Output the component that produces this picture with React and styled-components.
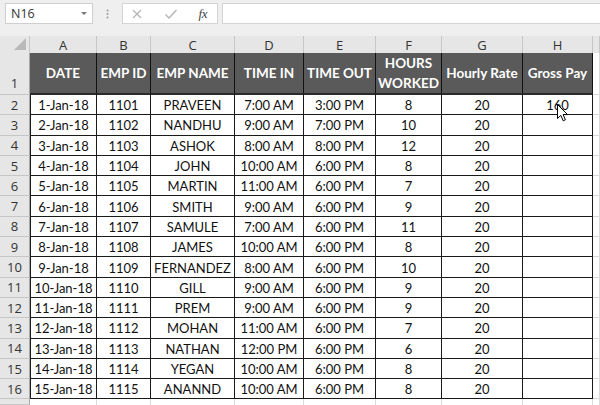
import React from 'react';
import styled, { createGlobalStyle } from 'styled-components';

const Global = createGlobalStyle`
  html, body { margin: 0; padding: 0; background: #fff; overflow: hidden; }
  #root { width: 600px; height: 405px; }
  * { box-sizing: border-box; }
`;

const Frame = styled.div`
  position: relative;
  width: 600px;
  height: 405px;
  display: flex;
  flex-direction: column;
  overflow: hidden;
  background: #fff;
`;

const Toolbar = styled.div`
  flex: none;
  height: 36px;
  display: flex;
  align-items: flex-start;
  padding: 3px 0 0 5px;
  background: #efefef;
  font-family: "Open Sans", "Noto Sans", sans-serif;
`;

const NameBox = styled.div`
  width: 88px;
  height: 21px;
  display: flex;
  align-items: center;
  justify-content: space-between;
  padding: 0 5px 0 5px;
  background: #fff;
  border: 1px solid #cfcfcf;
  font-size: 12.5px;
  color: #333;
`;

const Caret = styled.span`
  width: 0;
  height: 0;
  border-left: 3.5px solid transparent;
  border-right: 3.5px solid transparent;
  border-top: 3.5px solid #777;
`;

const Grip = styled.div`
  width: 29px;
  height: 21px;
  display: flex;
  align-items: center;
  justify-content: center;
`;

const FxGroup = styled.div`
  width: 96px;
  height: 21px;
  display: flex;
  align-items: center;
  justify-content: space-between;
  padding: 0 10px 0 8px;
  background: #fff;
  border: 1px solid #d4d4d4;
`;

const FxLabel = styled.span`
  font-family: "Liberation Serif", serif;
  font-style: italic;
  font-size: 13px;
  color: #444;
  letter-spacing: -0.5px;
`;

const FormulaInput = styled.div`
  flex: 1;
  height: 21px;
  margin-left: 4px;
  background: #fff;
  border: 1px solid #d4d4d4;
  border-right: none;
`;

const Sheet = styled.div`
  flex: 1;
  display: grid;
  grid-template-columns: 30px 67px 54px 84px 69px 72px 66px 81px 70px 7px;
  grid-template-rows: 17px 42px repeat(15, 20.3px) 1fr;
  font-family: Lato, "Open Sans", sans-serif;
`;

const Corner = styled.div`
  position: relative;
  background: #e6e6e6;
  border-right: 1px solid #c6c6c6;
  &::after {
    content: "";
    position: absolute;
    right: 3px;
    bottom: 3px;
    width: 0;
    height: 0;
    border-left: 12px solid transparent;
    border-bottom: 12px solid #b9b9b9;
  }
`;

const ColHead = styled.div`
  display: flex;
  align-items: center;
  justify-content: center;
  background: #e6e6e6;
  border-right: 1px solid #c6c6c6;
  font-family: "Open Sans", "Noto Sans", sans-serif;
  font-size: 13px;
  color: #333;
`;

const RowHead = styled.div`
  display: flex;
  align-items: ${(p) => (p.$bottom ? 'flex-end' : 'center')};
  justify-content: center;
  padding-bottom: ${(p) => (p.$bottom ? '2px' : '0')};
  background: #e6e6e6;
  border-bottom: 1px solid #c6c6c6;
  border-right: 1px solid #a8a8a8;
  font-family: "Open Sans", "Noto Sans", sans-serif;
  font-size: 13px;
  color: #333;
`;

const HeadCell = styled.div`
  display: flex;
  flex-direction: column;
  align-items: center;
  justify-content: center;
  background: #5a5a5a;
  border-right: 1px solid #111;
  border-bottom: 2px solid #2a2a2a;
  color: #fff;
  font-weight: 700;
  font-size: 13.5px;
  line-height: 20px;
  text-align: center;
  white-space: nowrap;
`;

const Cell = styled.div`
  display: flex;
  align-items: center;
  justify-content: center;
  padding-top: 1px;
  background: #fff;
  border-right: 1px solid #1a1a1a;
  border-bottom: 1px solid #1a1a1a;
  border-left: ${(p) => (p.$first ? '1px solid #1a1a1a' : 'none')};
  color: #111;
  font-size: 13px;
  white-space: nowrap;
`;

const EmptyCell = styled.div`
  background: #fff;
  border-right: 1px solid #dadada;
  border-bottom: ${(p) => (p.$noBottom ? 'none' : '1px solid #dadada')};
`;

const Pointer = styled.svg`
  position: absolute;
  left: 557px;
  top: 104px;
  width: 12px;
  height: 18px;
`;

const headers = ['DATE', 'EMP ID', 'EMP NAME', 'TIME IN', 'TIME OUT', ['HOURS', 'WORKED'], 'Hourly Rate', 'Gross Pay'];
const letters = ['A', 'B', 'C', 'D', 'E', 'F', 'G', 'H'];

const rows = [
  ['1-Jan-18', '1101', 'PRAVEEN', '7:00 AM', '3:00 PM', '8', '20', '160'],
  ['2-Jan-18', '1102', 'NANDHU', '9:00 AM', '7:00 PM', '10', '20', ''],
  ['3-Jan-18', '1103', 'ASHOK', '8:00 AM', '8:00 PM', '12', '20', ''],
  ['4-Jan-18', '1104', 'JOHN', '10:00 AM', '6:00 PM', '8', '20', ''],
  ['5-Jan-18', '1105', 'MARTIN', '11:00 AM', '6:00 PM', '7', '20', ''],
  ['6-Jan-18', '1106', 'SMITH', '9:00 AM', '6:00 PM', '9', '20', ''],
  ['7-Jan-18', '1107', 'SAMULE', '7:00 AM', '6:00 PM', '11', '20', ''],
  ['8-Jan-18', '1108', 'JAMES', '10:00 AM', '6:00 PM', '8', '20', ''],
  ['9-Jan-18', '1109', 'FERNANDEZ', '8:00 AM', '6:00 PM', '10', '20', ''],
  ['10-Jan-18', '1110', 'GILL', '9:00 AM', '6:00 PM', '9', '20', ''],
  ['11-Jan-18', '1111', 'PREM', '9:00 AM', '6:00 PM', '9', '20', ''],
  ['12-Jan-18', '1112', 'MOHAN', '11:00 AM', '6:00 PM', '7', '20', ''],
  ['13-Jan-18', '1113', 'NATHAN', '12:00 PM', '6:00 PM', '6', '20', ''],
  ['14-Jan-18', '1114', 'YEGAN', '10:00 AM', '6:00 PM', '8', '20', ''],
  ['15-Jan-18', '1115', 'ANANND', '10:00 AM', '6:00 PM', '8', '20', ''],
];

export default function App() {
  return (
    <Frame>
      <Global />
      <Toolbar>
        <NameBox>
          <span>N16</span>
          <Caret />
        </NameBox>
        <Grip>
          <svg width="3" height="10" viewBox="0 0 3 10">
            <circle cx="1.5" cy="1.5" r="1" fill="#9a9a9a" />
            <circle cx="1.5" cy="5" r="1" fill="#9a9a9a" />
            <circle cx="1.5" cy="8.5" r="1" fill="#9a9a9a" />
          </svg>
        </Grip>
        <FxGroup>
          <svg width="12" height="12" viewBox="0 0 12 12">
            <path d="M2 2 L10 10 M10 2 L2 10" stroke="#b4b4b4" strokeWidth="1.3" fill="none" />
          </svg>
          <svg width="14" height="12" viewBox="0 0 14 12">
            <path d="M1.5 6.5 L5 10 L12.5 2" stroke="#b4b4b4" strokeWidth="1.4" fill="none" />
          </svg>
          <FxLabel>fx</FxLabel>
        </FxGroup>
        <FormulaInput />
      </Toolbar>
      <Sheet>
        <Corner />
        {letters.map((l) => (
          <ColHead key={l}>{l}</ColHead>
        ))}
        <ColHead />

        <RowHead $bottom>1</RowHead>
        {headers.map((h, i) => (
          <HeadCell key={i}>
            {Array.isArray(h) ? h.map((t) => <span key={t}>{t}</span>) : h}
          </HeadCell>
        ))}
        <EmptyCell />

        {rows.map((r, ri) => (
          <React.Fragment key={ri}>
            <RowHead>{ri + 2}</RowHead>
            {r.map((v, ci) => (
              <Cell key={ci} $first={ci === 0}>
                {v}
              </Cell>
            ))}
            <EmptyCell />
          </React.Fragment>
        ))}

        <RowHead />
        {letters.map((l) => (
          <EmptyCell key={l} $noBottom />
        ))}
        <EmptyCell $noBottom />
      </Sheet>
      <Pointer viewBox="0 0 12 18">
        <path
          d="M0.5 0.5 L0.5 14.5 L3.8 11.4 L6.2 16.8 L8.4 15.8 L6.1 10.6 L10.6 10.6 Z"
          fill="#fff"
          stroke="#000"
          strokeWidth="1"
          strokeLinejoin="round"
        />
      </Pointer>
    </Frame>
  );
}
